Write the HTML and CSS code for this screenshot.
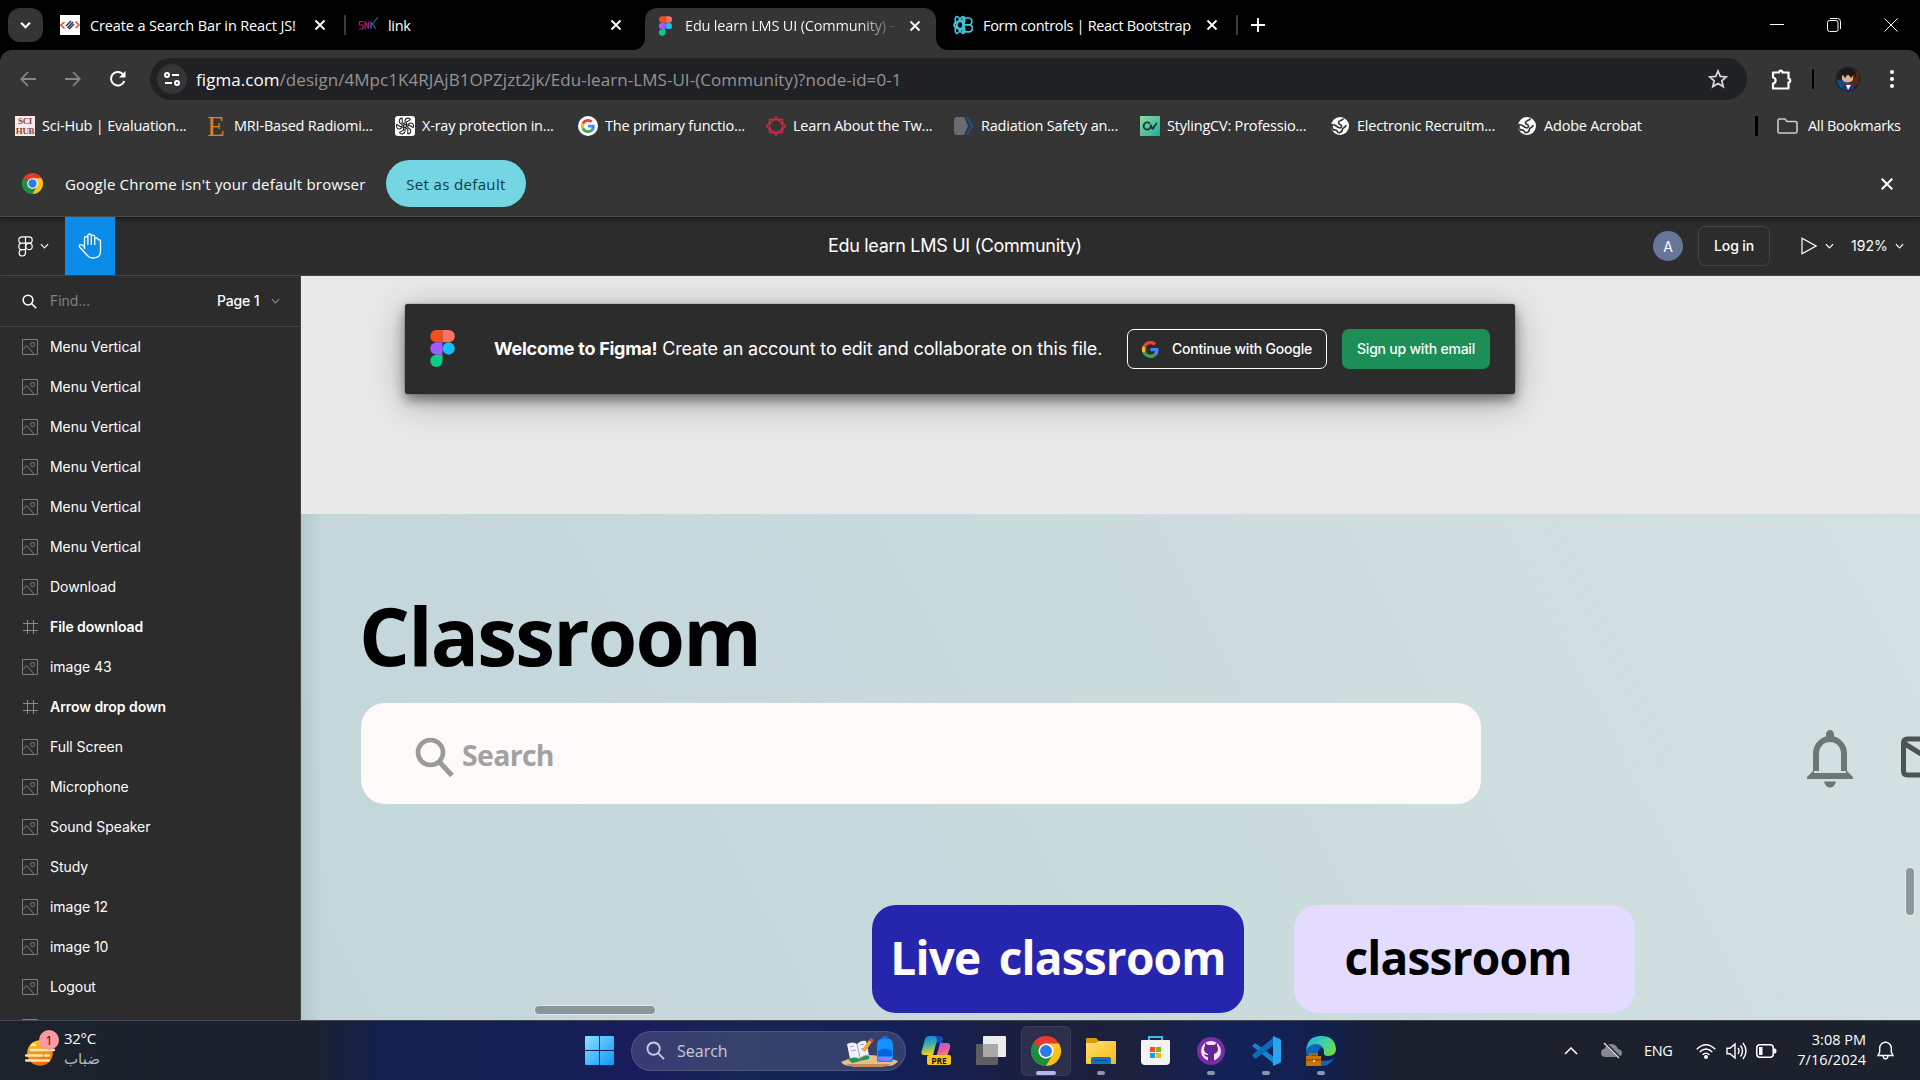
FILE: index.html
```html
<!DOCTYPE html>
<html lang="en">
<head>
<meta charset="utf-8">
<title>Edu learn LMS UI (Community) – Figma</title>
<link rel="stylesheet" href="styles.css">
</head>
<body>
<svg class="defs" width="0" height="0">
  <symbol id="x" viewBox="0 0 12 12"><path d="M1.500 1.500l9 9M10.500 1.500l-9 9" fill="none" stroke="currentColor" stroke-width="1.800"/></symbol>
  <symbol id="chev" viewBox="0 0 10 6"><path d="M1 1l4 4 4-4" fill="none" stroke="currentColor" stroke-width="1.300"/></symbol>
  <symbol id="figma" viewBox="0 0 24 36"><path d="M6 0h6v12H6A6 6 0 0 1 6 0z" fill="#f24e1e"/><path d="M12 0h6a6 6 0 0 1 0 12h-6z" fill="#ff7262"/><path d="M6 12h6v12H6a6 6 0 0 1 0-12z" fill="#a259ff"/><circle cx="18" cy="18" r="6" fill="#1abcfe"/><path d="M6 24h6v6a6 6 0 1 1-6-6z" fill="#0acf83"/></symbol>
  <symbol id="google" viewBox="0 0 48 48"><path fill="#EA4335" d="M24 9.500c3.500 0 6.700 1.200 9.200 3.600l6.900-6.900C35.900 2.400 30.500 0 24 0 14.600 0 6.500 5.400 2.600 13.200l8 6.200C12.400 13.700 17.700 9.500 24 9.500z"/><path fill="#4285F4" d="M47 24.500c0-1.600-.2-3.100-.4-4.500H24v9h12.900c-.6 3-2.300 5.500-4.800 7.200l7.700 6C44.400 38 47 31.800 47 24.500z"/><path fill="#FBBC05" d="M10.500 28.600a14.500 14.500 0 0 1 0-9.200l-8-6.200a24 24 0 0 0 0 21.600z"/><path fill="#34A853" d="M24 48c6.500 0 11.900-2.100 15.900-5.800l-7.700-6c-2.200 1.500-4.900 2.300-8.200 2.300-6.300 0-11.600-4.200-13.500-9.900l-8 6.200C6.500 42.600 14.600 48 24 48z"/></symbol>
  <symbol id="chrome" viewBox="0 0 48 48"><path d="M24 24L3.200 12A24 24 0 0 1 44.800 12z" fill="#e33b2e"/><path d="M24 24l20.800-12A24 24 0 0 1 24 48z" fill="#fbc116"/><path d="M24 24v24A24 24 0 0 1 3.200 12z" fill="#229342"/><path d="M24 12h20.800L34.400 30 24 48z" fill="#fcc934"/><path d="M3.200 12L13.600 30 24 36l10.400-6L24 48A24 24 0 0 1 3.200 12z" fill="#1e8e3e"/><circle cx="24" cy="24" r="12" fill="#fff"/><circle cx="24" cy="24" r="9.500" fill="#2d78ea"/></symbol>
  <symbol id="globe" viewBox="0 0 20 20"><circle cx="10" cy="10" r="9" fill="#fff"/><path d="M13.500 2.500c-1 2.500-5 1.500-5 4s3 1.500 3 3.500-1.500 2-3 1.500S5.500 8.500 2 8.500c-.5 2 0 4 1.500 5.500 2 0 3-.5 3.500 1s1.500 2 3 1.500 2.500-2 2.500-3.500 3.500-1 3.500-4" fill="none" stroke="#353535" stroke-width="1.700"/></symbol>
  <symbol id="pic" viewBox="0 0 16 16"><g fill="none" stroke="#7d7d7d"><path d="M.5.5h15v15H.5z"/><circle cx="10.500" cy="5.500" r="2"/><path d="M1 10.500l3.500-4 8 9"/></g></symbol>
  <symbol id="frame" viewBox="0 0 16 16"><path d="M5.500 1v14M11.500 1v14M1 4.500h15M1 11.500h15" stroke="#8b8b8b" fill="none"/></symbol>
  <symbol id="lens" viewBox="0 0 20 20"><circle cx="8" cy="8" r="6.500" fill="none" stroke="currentColor" stroke-width="2"/><path d="M12.500 12.500L19 19" stroke="currentColor" stroke-width="2"/></symbol>
</svg>

<div class="tabs">
  <div class="tabsearch"><svg width="11" height="8" viewBox="0 0 10 6"><path d="M1 1l4 4 4-4" fill="none" stroke="#fff" stroke-width="2"/></svg></div>
  <div class="tab t1">
    <svg width="20" height="20" viewBox="0 0 20 20"><path fill="#fff" d="M0 0h20v20H0z"/><path d="M4.500 7l-3.500 3 3.500 3.500M15.500 6.500l3.500 3.500-3.500 3" fill="none" stroke="#e5533a" stroke-width="1.600"/><path d="M6 11l5-5M7.500 13l5.500-6M9 14l5-5" stroke="#29324d" stroke-width="1.500"/></svg>
    <span>Create a Search Bar in React JS!</span><svg class="x" width="12" height="12"><use href="#x"/></svg>
  </div>
  <div class="tab t2">
    <svg width="20" height="20" viewBox="0 0 20 20"><path d="M5 6.500H1.500V10H5v4H1M7 14V6.500l3.500 7V6.500" fill="none" stroke="#b01b78" stroke-width="1.200"/><path d="M13 14V7l5 7M12 12l8-10" fill="none" stroke="#186ba9" stroke-width="1.200"/></svg>
    <span>link</span><svg class="x" width="12" height="12"><use href="#x"/></svg>
  </div>
  <div class="tab t3">
    <svg width="13" height="20"><use href="#figma"/></svg>
    <span class="fade">Edu learn LMS UI (Community) –</span><svg class="x" width="12" height="12"><use href="#x"/></svg>
  </div>
  <div class="tab t4">
    <svg width="20" height="20" viewBox="0 0 20 20"><g fill="none" stroke="#41c7dc" stroke-width="1.700"><path d="M10 3h5.500a3.300 3.300 0 0 1 0 6.800H10zM10 9.800h6a3.500 3.500 0 0 1 0 7h-6z"/><ellipse cx="7" cy="10" rx="3.200" ry="9" transform="rotate(25 7 10)"/><ellipse cx="7" cy="10" rx="3.200" ry="9" transform="rotate(-25 7 10)"/><path d="M10 6.500Q1 6 1 10t9 3.500"/></g></svg>
    <span>Form controls | React Bootstrap</span><svg class="x" width="12" height="12"><use href="#x"/></svg>
  </div>
  <svg class="plus" width="14" height="14" viewBox="0 0 14 14"><path d="M7 0v14M0 7h14" stroke="#fff" stroke-width="1.900"/></svg>
  <div class="winctl">
    <svg width="14" height="14" viewBox="0 0 14 14"><path d="M0 6.500h14" stroke="#fff"/></svg>
    <svg width="14" height="14" viewBox="0 0 14 14"><g fill="none" stroke="#fff"><rect x=".5" y="2.500" width="10.500" height="11" rx="2"/><path d="M3 .5h7.500a3 3 0 0 1 3 3V11"/></g></svg>
    <svg width="14" height="14" viewBox="0 0 14 14"><path d="M.5.5l13 13M13.500.5l-13 13" stroke="#fff"/></svg>
  </div>
</div>

<div class="navbar">
  <svg class="dim" width="16" height="16" viewBox="0 0 16 16"><path d="M16 8H1.500M8 1L1.300 8 8 15" fill="none" stroke="currentColor" stroke-width="1.800"/></svg>
  <svg class="dim" width="16" height="16" viewBox="0 0 16 16"><path d="M0 8h14.500M8 1l6.700 7L8 15" fill="none" stroke="currentColor" stroke-width="1.800"/></svg>
  <svg width="16" height="16" viewBox="0 0 16 16"><path d="M14.300 10A6.800 6.800 0 1 1 13 3.300l1.500 2" fill="none" stroke="#fff" stroke-width="2"/><path d="M15.500 0v6.500H9z" fill="#fff"/></svg>
  <div class="omni">
    <div class="tune"><svg width="16" height="14" viewBox="0 0 16 14"><g fill="none" stroke="#fff" stroke-width="2"><circle cx="3" cy="3" r="2"/><path d="M8 3h7M1 11h7"/><circle cx="13" cy="11" r="2"/></g></svg></div>
    <span class="url"><b>figma.com</b>/design/4Mpc1K4RJAjB1OPZjzt2jk/Edu-learn-LMS-UI-(Community)?node-id=0-1</span>
    <svg width="20" height="20" viewBox="0 0 20 20"><path d="M10 2l2.300 5.400 6 .5-4.500 3.900 1.400 5.800L10 14.500l-5.200 3.100 1.400-5.800L1.700 7.900l6-.5z" fill="none" stroke="#d5d5d5" stroke-width="1.800"/></svg>
  </div>
  <svg class="puzzle" width="21" height="21" viewBox="0 0 21 21"><path d="M2 3.500h6c.3-2.500 3.200-2.500 3.500 0H17.500v6c2.500.5 2.500 3.500 0 4v6H2v-5c3.500-.5 3.500-5.500 0-6z" fill="none" stroke="#fff" stroke-width="2.200" stroke-linejoin="round"/></svg>
  <i class="vbar"></i>
  <svg class="person" width="26" height="26" viewBox="0 0 26 26"><circle cx="13" cy="13" r="12.500" fill="#16252f"/><path d="M16 2l8 5v11l-8 4z" fill="#522a1d"/><path d="M2 14l10 1-1 10q-8-3-9-11z" fill="#174e86"/><path d="M7 9h11v5q-5 5-11 0z" fill="#d9b196"/><path d="M4 12Q4 2 13 2t8 10l-2-4-3 4-3-4-3 4-2-3z" fill="#21160f"/><path d="M8 18l5 2 5-2 1 5q-6 3-12 0z" fill="#1b3778"/><path d="M11 19h5l-3 5z" fill="#fff"/><path d="M11 17.500h5V19h-5z" fill="#b42727"/></svg>
  <svg width="4" height="18" viewBox="0 0 4 18"><g fill="#fff"><circle cx="2" cy="2" r="2"/><circle cx="2" cy="9" r="2"/><circle cx="2" cy="16" r="2"/></g></svg>
</div>

<div class="bookmarks">
  <div class="bm w1"><div class="sci">SCI<br>HUB</div><span>Sci-Hub | Evaluation...</span></div>
  <div class="bm w2"><div class="ele">E</div><span>MRI-Based Radiomi...</span></div>
  <div class="bm w3"><svg width="20" height="20" viewBox="0 0 20 20"><rect width="20" height="20" rx="3" fill="#fff"/><g fill="none" stroke="#222" stroke-width="1.100"><path id="petal" d="M10 7.300V4.600a2.900 2.900 0 0 1 5.400-1l-4 2.400v5"/><use href="#petal" transform="rotate(60 10 10)"/><use href="#petal" transform="rotate(120 10 10)"/><use href="#petal" transform="rotate(180 10 10)"/><use href="#petal" transform="rotate(240 10 10)"/><use href="#petal" transform="rotate(300 10 10)"/></g></svg><span>X-ray protection in...</span></div>
  <div class="bm w4"><svg width="20" height="20" viewBox="0 0 20 20"><circle cx="10" cy="10" r="10" fill="#fff"/><use href="#google" x="3" y="3" width="14" height="14"/></svg><span>The primary functio...</span></div>
  <div class="bm w5"><svg width="20" height="20" viewBox="0 0 20 20"><g fill="none" stroke="#c62d45" stroke-width="1.400"><path d="M10 .8l2.500 3 4-.6.200 4 2.800 2.800-2.800 2.800-.2 4-4-.6-2.500 3-2.500-3-4 .6-.2-4L.500 10l2.800-2.800.2-4 4 .6z"/><circle cx="10" cy="10" r="6.500"/></g></svg><span>Learn About the Tw...</span></div>
  <div class="bm w6"><svg width="20" height="20" viewBox="0 0 20 20"><path d="M2 1h8l4 9-4 9H2l-2-2V3z" fill="#696b72"/><path d="M13 1l5 9-5 9" fill="none" stroke="#17538f" stroke-width="2"/></svg><span>Radiation Safety an...</span></div>
  <div class="bm w7"><svg width="20" height="20" viewBox="0 0 20 20"><defs><linearGradient id="cv" x2="1" y2="1"><stop stop-color="#8edba0"/><stop offset="1" stop-color="#21ad9c"/></linearGradient></defs><path fill="url(#cv)" d="M0 0h20v20H0z"/><path d="M17 7q-1.500 1-3 4t-2 1L10.500 8.500M10.800 10a3.600 3.600 0 1 1-1-2.500" fill="none" stroke="#163d3b" stroke-width="1.900"/></svg><span>StylingCV: Professio...</span></div>
  <div class="bm w8"><svg width="20" height="20"><use href="#globe"/></svg><span>Electronic Recruitm...</span></div>
  <div class="bm w9"><svg width="20" height="20"><use href="#globe"/></svg><span>Adobe Acrobat</span></div>
  <i class="vbar"></i>
  <div class="bm all"><svg width="21" height="16" viewBox="0 0 21 16"><path d="M1 2.500Q1 1 2.500 1H8l2 2.500h8.500q1.500 0 1.500 1.500v8.500q0 1.500-1.500 1.500h-16Q1 15 1 13.500z" fill="none" stroke="#ccc" stroke-width="1.600"/></svg><span>All Bookmarks</span></div>
</div>

<div class="infobar">
  <svg width="21" height="21"><use href="#chrome"/></svg>
  <span>Google Chrome isn't your default browser</span>
  <button>Set as default</button>
  <svg class="x" width="14" height="14"><use href="#x"/></svg>
</div>

<div class="figbar">
  <div class="menu">
    <svg width="15" height="21" viewBox="0 0 15 21"><g fill="none" stroke="#fff" stroke-width="1.200"><path d="M7.500.8H4a3.200 3.200 0 0 0 0 6.400h3.500zM7.500.8H11a3.200 3.200 0 0 1 0 6.400H7.500zM7.500 7.200H4a3.200 3.200 0 0 0 0 6.400h3.500zM7.500 13.600H4a3.200 3.200 0 1 0 3.500 3.200z"/><circle cx="11" cy="10.400" r="3.200"/></g></svg>
    <svg width="9" height="6"><use href="#chev"/></svg>
  </div>
  <div class="hand"><svg width="24" height="27" viewBox="0 0 24 27"><path d="M6.500 16V5.500q0-2 1.700-2t1.700 2V12 3q0-2 1.700-2t1.700 2v9V4q0-1.800 1.700-1.800T16.700 4v8V6.500q0-1.700 1.600-1.700t1.700 1.700q2.500 0 2.500 2V18q0 7-7.500 7-4 0-6-3l-7-7.500q-1.500-2 0-2.800Q4 11 6.500 14" fill="none" stroke="#fff" stroke-width="1.300"/></svg></div>
  <div class="title">Edu learn LMS UI (Community)</div>
  <div class="user">A</div>
  <div class="login">Log in</div>
  <svg class="play" width="16" height="18" viewBox="0 0 16 18"><path d="M1 1.200L15 9 1 16.800z" fill="none" stroke="#fff" stroke-width="1.200"/></svg>
  <svg class="c1" width="9" height="6"><use href="#chev"/></svg>
  <span class="zoom">192%</span>
  <svg width="9" height="6"><use href="#chev"/></svg>
</div>

<div class="work">
  <div class="side">
    <div class="find"><svg width="15" height="15"><use href="#lens"/></svg><span class="ph">Find...</span><span class="page">Page 1</span><svg class="pc" width="9" height="6"><use href="#chev"/></svg></div>
    <div class="layers">
      <div class="row"><svg><use href="#pic"/></svg><span>Menu Vertical</span></div>
      <div class="row"><svg><use href="#pic"/></svg><span>Menu Vertical</span></div>
      <div class="row"><svg><use href="#pic"/></svg><span>Menu Vertical</span></div>
      <div class="row"><svg><use href="#pic"/></svg><span>Menu Vertical</span></div>
      <div class="row"><svg><use href="#pic"/></svg><span>Menu Vertical</span></div>
      <div class="row"><svg><use href="#pic"/></svg><span>Menu Vertical</span></div>
      <div class="row"><svg><use href="#pic"/></svg><span>Download</span></div>
      <div class="row bold"><svg><use href="#frame"/></svg><span>File download</span></div>
      <div class="row"><svg><use href="#pic"/></svg><span>image 43</span></div>
      <div class="row bold"><svg><use href="#frame"/></svg><span>Arrow drop down</span></div>
      <div class="row"><svg><use href="#pic"/></svg><span>Full Screen</span></div>
      <div class="row"><svg><use href="#pic"/></svg><span>Microphone</span></div>
      <div class="row"><svg><use href="#pic"/></svg><span>Sound Speaker</span></div>
      <div class="row"><svg><use href="#pic"/></svg><span>Study</span></div>
      <div class="row"><svg><use href="#pic"/></svg><span>image 12</span></div>
      <div class="row"><svg><use href="#pic"/></svg><span>image 10</span></div>
      <div class="row"><svg><use href="#pic"/></svg><span>Logout</span></div>
      <div class="row"><svg><use href="#pic"/></svg></div>
    </div>
  </div>
  <div class="canvas">
    <div class="banner">
      <svg width="25" height="37" viewBox="0 0 24 36"><use href="#figma"/></svg>
      <p><b>Welcome to Figma!</b> <span>Create an account to edit and collaborate on this file.</span></p>
      <div class="gbtn"><svg width="17" height="17"><use href="#google"/></svg><span>Continue with Google</span></div>
      <div class="ebtn"><span>Sign up with email</span></div>
    </div>
    <div class="board">
      <h1>Classroom</h1>
      <div class="line">
        <div class="searchbox"><svg width="40" height="42" viewBox="0 0 40 42"><circle cx="15.500" cy="16.500" r="12.500" fill="none" stroke="#9a9a99" stroke-width="4.600"/><path d="M24.500 26l12.500 13.500" stroke="#9a9a99" stroke-width="5"/></svg><span>Search</span></div>
        <svg class="bell" width="46" height="58" viewBox="0 0 46 58"><path d="M9 41V23.500a14 14.500 0 0 1 28 0V41" fill="none" stroke="#6d7677" stroke-width="6"/><path d="M19 9V4.500a4 4.500 0 0 1 8 0V9zM0 49v-2l7-7v3h32v-3l7 7v2zM17 51.500h12q-1.500 6-6 6t-6-6z" fill="#6d7677"/></svg>
        <svg class="mail" width="19" height="42" viewBox="0 0 19 42"><path d="M30 3H6.500Q2.500 3 2.500 7v28q0 4 4 4H30M4 8l26 16" fill="none" stroke="#4d5253" stroke-width="5"/></svg>
      </div>
      <div class="chips"><div class="live"><span>Live classroom</span></div><div class="cls"><span>classroom</span></div></div>
      <i class="hscroll"></i><i class="vscroll"></i>
    </div>
  </div>
</div>

<div class="taskbar">
  <div class="weather">
    <svg width="36" height="38" viewBox="0 0 36 38"><defs><linearGradient id="sun" x2=".3" y2="1"><stop stop-color="#ffd21e"/><stop offset="1" stop-color="#ef6c0c"/></linearGradient></defs><circle cx="15" cy="21" r="12.800" fill="url(#sun)"/><g stroke="#f6e4b4" stroke-width="2.400" stroke-linecap="round"><path d="M7 13h3M6 18h23M1 23.500h16M20 23.500h4M1 28.500h23"/></g></svg>
    <span class="badge">1</span>
    <div class="wtext"><span>32°C</span><span class="ar" lang="ar">ضباب</span></div>
  </div>
  <div class="apps">
    <svg class="start" width="29" height="29" viewBox="0 0 29 29"><defs><linearGradient id="win" x2="1" y2="1"><stop stop-color="#8be0ff"/><stop offset="1" stop-color="#1195f7"/></linearGradient></defs><path d="M1 0h13v14H0V1q0-1 1-1zM15 0h13q1 0 1 1v13H15zM0 15h14v14H1q-1 0-1-1zM15 15h14v13q0 1-1 1H15z" fill="url(#win)"/></svg>
    <div class="tsearch"><svg width="19" height="19"><use href="#lens"/></svg><span>Search</span>
      <svg width="57" height="32" viewBox="0 0 57 32"><path d="M0 27q15-7 28-7t29 6q-3 5-10 5H10q-7 0-10-4z" fill="#e9bc8b"/><path d="M5 29h45q-4 3-9 3H12z" fill="#c48a58"/><path d="M6 9q6-3 10 0 4-4 9-3l3 14q-5-1-9 3-4-2-10 1z" fill="#f3f0ff"/><path d="M7 24q7-3 11 0 5-4 10-3v3q-6 1-17 4z" fill="#1d9653"/><path d="M16 9l3 14M9 12l4-1M10 16l5-1M19 10l4-1M20 14l5-1" stroke="#9fa0b9"/><path d="M21 15l7-10 3 2-7 10z" fill="#f6a623"/><path d="M28 5l2-2 3 2-2 3z" fill="#e14a50"/><path d="M36 10q0-7 8-7t8 7v15q0 2-2 2H38q-2 0-2-2z" fill="#168fff"/><path d="M41 4q3-5 6 0" fill="none" stroke="#1b65cf" stroke-width="2"/><path d="M37 16q7-5 14 0v5H37z" fill="#0065df"/><path d="M37 22h14v2q-7 4-14 0z" fill="#9d73ff"/></svg>
    </div>
    <div class="app"><svg width="30" height="30" viewBox="0 0 30 30"><defs><linearGradient id="ca" x2=".2" y2="1"><stop stop-color="#1378e8"/><stop offset=".5" stop-color="#38b6a4"/><stop offset="1" stop-color="#f2cc26"/></linearGradient><linearGradient id="cb" x2=".4" y2="1"><stop stop-color="#9a5cf0"/><stop offset=".6" stop-color="#eb5b96"/><stop offset="1" stop-color="#f79a45"/></linearGradient></defs><path d="M8 0h10q3 0 4 4h-3q-3 0-4 4l-3 11H3q-4 0-2-5L4 3q1-3 4-3z" fill="url(#ca)"/><path d="M13 0h6q2 0 3 7h-5q-2-7-4-7z" fill="#1747b8"/><path d="M19 7h7q4 0 3 5l-3 8q-1 2-4 2h-7z" fill="url(#cb)"/><rect x="6" y="19" width="24" height="10" rx="2" fill="#fac51a"/><text x="18" y="27.500" class="pre">PRE</text></svg></div>
    <div class="app"><svg width="30" height="30" viewBox="0 0 30 30"><rect y="8" width="22" height="21" rx="1" fill="#5d5d62"/><rect x="7" width="23" height="21" rx="1" fill="#ececec"/><path d="M7 8h15v13H7z" fill="#a9a9a9"/></svg></div>
    <div class="app on"><svg width="30" height="30"><use href="#chrome"/></svg></div>
    <div class="app run"><svg width="30" height="30" viewBox="0 0 30 30"><defs><linearGradient id="fo" x2="1" y2="1"><stop stop-color="#ffdf71"/><stop offset="1" stop-color="#fab814"/></linearGradient></defs><path d="M0 3q0-1 1-1h9l3 3v5H0z" fill="#dc9a08"/><path d="M0 7h10l3-2h16q1 0 1 1v21q0 1-1 1H1q-1 0-1-1z" fill="url(#fo)"/><path d="M5 28v-5q0-2 2-2h16q2 0 2 2v5z" fill="#0d74c5"/><path d="M8 24.500h14" stroke="#064d91"/></svg></div>
    <div class="app"><svg width="30" height="30" viewBox="0 0 30 30"><path d="M8 6V1h13v5" fill="none" stroke="#36bff5" stroke-width="2"/><path d="M0 5q0-1 1-1h27q1 0 1 1v20q0 4-4 4H4q-4 0-4-4z" fill="#f3f3f3"/><path d="M9 11h5v5H9z" fill="#f25022"/><path d="M15 11h5v5h-5z" fill="#7fba00"/><path d="M9 17h5v5H9z" fill="#00a4ef"/><path d="M15 17h5v5h-5z" fill="#ffb900"/></svg></div>
    <div class="app run"><svg width="28" height="28" viewBox="0 0 28 28"><circle cx="14" cy="14" r="14" fill="#7b2ba5"/><circle cx="14" cy="14" r="10" fill="#f7ebfb"/><path d="M11 24v-4q-3 0-4-3 2 1 4 1v-1q-4-1-4-5 0-2 1-3V6l3 2h6l3-2v3q1 1 1 3 0 4-4 5v7z" fill="#682390"/></svg></div>
    <div class="app run"><svg width="30" height="30" viewBox="0 0 30 30"><path d="M1 10l3-3 19 14v7z" fill="#1584d0"/><path d="M1 19l3 4L23 9V1z" fill="#0b6cb8"/><path d="M22 0l7 3q1 .5 1 1.500v21q0 1-1 1.500l-7 3z" fill="#28a4f2"/></svg></div>
    <div class="app run"><svg width="30" height="30" viewBox="0 0 30 30"><defs><linearGradient id="ed" x2="1" y2=".6"><stop stop-color="#20a9e0"/><stop offset=".5" stop-color="#37cdb5"/><stop offset="1" stop-color="#68dc4c"/></linearGradient></defs><path d="M0 15Q1 0 15 0t15 13q0 7-8 7-5 0-4-4 0-7-8-7Q3 9 0 15z" fill="url(#ed)"/><path d="M0 15q3-7 10-7 4 0 6 3-5 3-4 9 2 5 7 5 5 0 9-3-4 8-13 8Q1 30 0 15z" fill="#0d65bd"/><path d="M0 20h15v10H0z" fill="#c87404"/><path d="M0 24h15" stroke="#754008"/><path d="M4 20v-2h7v2" fill="none" stroke="#b87008" stroke-width="1.500"/><path d="M7 24h2v2H7z" fill="#ffd34b"/></svg></div>
  </div>
  <div class="tray">
    <svg width="14" height="8" viewBox="0 0 14 8"><path d="M1 7l6-6 6 6" fill="none" stroke="#fff" stroke-width="1.500"/></svg>
    <svg class="cloud" width="21" height="17" viewBox="0 0 21 17"><path d="M5 15q-5 0-5-4t4-4.500Q5 2 10 2t7 5q4 .5 4 4t-4 4z" fill="#85898f"/><path d="M3 0l16 16" stroke="#1d2430" stroke-width="3"/><path d="M3 1l15 15" stroke="#e8e8e8" stroke-width="1.200"/></svg>
    <span class="eng">ENG</span>
    <svg class="wifi" width="20" height="16" viewBox="0 0 20 16"><g fill="none" stroke="#fff" stroke-width="1.400"><path d="M.7 6.200q9.300-9 18.600 0M3.700 9q6.300-6 12.600 0M6.500 11.800q3.500-3.300 7 0"/></g><circle cx="10" cy="14" r="2" fill="#fff"/></svg>
    <svg class="spk" width="21" height="18" viewBox="0 0 21 18"><g fill="none" stroke="#fff" stroke-width="1.400"><path d="M1 6.300h3L9 2v14l-5-4.300H1zM12 6q2 3 0 6M14.500 3.500q4 5.500 0 11M17 1q6 8 0 16"/></g></svg>
    <svg class="bat" width="21" height="14" viewBox="0 0 21 14"><rect x=".8" y=".8" width="16.400" height="12.400" rx="3" fill="none" stroke="#fff" stroke-width="1.500"/><path d="M3 3h3.500v8H3zM18 4.500h1q1.500 0 1.500 2.500T19 9.500h-1z" fill="#fff"/></svg>
    <div class="clock"><span>3:08 PM</span><span>7/16/2024</span></div>
    <svg class="tbell" width="17" height="19" viewBox="0 0 17 19"><path d="M1 14.500l1.700-3.500V7a5.800 5.800 0 0 1 11.600 0v4l1.700 3.500zM6 15q.5 3 2.500 3t2.500-3" fill="none" stroke="#fff" stroke-width="1.400"/></svg>
  </div>
</div>
</body>
</html>
```
FILE: styles.css
```css
* { box-sizing: border-box; }
body { margin: 0; width: 1920px; height: 1080px; overflow: hidden; background: #000; color: #fff; font: 15px "Open Sans", "Noto Sans", sans-serif; }
svg { display: block; flex: none; }
.defs { position: absolute; }
span, p { white-space: nowrap; }

.tabs { height: 50px; display: flex; align-items: center; background: #000; padding-left: 8px; }
.tabsearch { width: 35px; height: 34px; border-radius: 12px; background: #353535; display: flex; align-items: center; justify-content: center; }
.tab { display: flex; flex: none; align-items: center; height: 42px; font-size: 14.5px; letter-spacing: -.32px; }
.tab span { flex: 1; padding-left: 10px; }
.t1 { width: 283px; padding: 0 17px 0 0; margin-left: 17px; letter-spacing: -.13px; }
.t1::after, .t4::after { content: ""; width: 2px; height: 20px; background: #3c3c3c; margin-left: 18px; margin-right: -20px; }
.t2 { width: 302px; padding-left: 15px; padding-right: 23px; }
.t3 { width: 291px; height: 42px; margin-top: 8px; border-radius: 12px 12px 0 0; background: #353535; padding: 0 14px 7px 14px; position: relative; letter-spacing: -.18px; }
.t3::before, .t3::after { content: ""; position: absolute; bottom: 0; width: 12px; height: 12px; }
.t3::before { left: -12px; background: radial-gradient(circle at 0 0, #000 11.5px, #353535 12.5px); }
.t3::after { right: -12px; background: radial-gradient(circle at 100% 0, #000 11.5px, #353535 12.5px); }
.t3 .fade { padding-left: 13px; flex: none; width: 225px; overflow: hidden; background: linear-gradient(90deg, #fff 185px, #444 224px); background-clip: text; color: transparent; }
.t3 .x { margin-left: 12px; }
.t4 { width: 299px; padding-left: 17px; padding-right: 17px; }
.plus { margin-left: 16px; }
.winctl { margin-left: auto; display: flex; gap: 43px; padding-right: 22px; }

.navbar { height: 58px; background: #353535; border-radius: 12px 12px 0 0; display: flex; align-items: center; padding: 0 26px 0 20px; }
.navbar > svg + svg { margin-left: 29px; }
.dim { color: #858585; }
.omni { margin-left: 24px; width: 1597px; height: 42px; border-radius: 21px; background: #202124; display: flex; align-items: center; padding: 0 19px 0 7px; }
.tune { width: 30px; height: 30px; border-radius: 50%; background: #353535; display: flex; align-items: center; justify-content: center; }
.url { flex: 1; margin-left: 9px; color: #949494; font-size: 17px; letter-spacing: .06px; }
.url b { color: #fff; font-weight: 400; }
.puzzle { margin-left: 24px; }
.vbar { width: 3px; height: 20px; background: #000; border-radius: 1px; }
.navbar .vbar { margin-left: 20px; width: 2px; }
.person { margin-left: 21px; }
.navbar svg.person + svg { margin-left: auto; }

.bookmarks { height: 36px; background: #353535; display: flex; align-items: center; padding-left: 15px; font-size: 14.5px; letter-spacing: -.2px; }
.bm { display: flex; align-items: center; gap: 7px; }
.bm span { margin-top: -2px; }
.w1 { width: 192px; } .w2 { width: 188px; } .w3 { width: 183px; } .w4 { width: 188px; } .w5 { width: 188px; } .w6 { width: 186px; } .w7 { width: 190px; } .w8 { width: 187px; } .w9 { width: 238px; }
.sci { width: 20px; height: 20px; background: #f6eceb; color: #9d3a35; font: bold 9px/10px "Liberation Serif", serif; letter-spacing: -.3px; text-align: center; }
.ele { width: 20px; color: #e57c20; font: 29px/20px "Liberation Serif", serif; }
.all { gap: 10px; margin-left: 19px; letter-spacing: -.3px; }

.infobar { height: 73px; background: #353535; border-bottom: 1px solid #474d50; display: flex; align-items: center; padding: 7px 26px 0 22px; font-size: 15px; }
.infobar span { margin-left: 22px; width: 300px; letter-spacing: .2px; }
.infobar button { margin-left: 21px; width: 140px; height: 47px; border: 0; border-radius: 24px; background: #74d5e3; color: #093d48; font: 500 15px "Open Sans", sans-serif; letter-spacing: .35px; padding: 0; }
.infobar .x { margin-left: auto; }

.figbar { height: 59px; background: #2c2c2c; border-bottom: 1px solid #444; display: flex; align-items: center; font-family: Inter, sans-serif; box-shadow: inset 0 5px 5px -4px #111; }
.menu { width: 65px; display: flex; align-items: center; gap: 7px; padding-left: 18px; }
.hand { width: 50px; height: 58px; background: #0c8ce9; display: flex; align-items: center; justify-content: center; }
.title { margin-left: 713px; margin-top: -2px; width: 825px; font-size: 18px; letter-spacing: -.31px; }
.user { width: 30px; height: 30px; border-radius: 50%; background: #667799; display: flex; align-items: center; justify-content: center; font-size: 14px; }
.login { margin-left: 15px; width: 72px; height: 40px; border: 1px solid #444; border-radius: 7px; display: flex; align-items: center; justify-content: center; font-size: 14px; font-weight: 500; letter-spacing: -.15px; padding-bottom: 1px; }
.play { margin-left: 31px; }
.c1 { margin-left: 8px; }
.zoom { margin-left: 17px; width: 44px; font-size: 14px; padding-bottom: 1px; }

.work { height: 744px; display: flex; font-family: Inter, sans-serif; }
.side { width: 301px; background: #2c2c2c; border-right: 1px solid #444; font-size: 14px; letter-spacing: -.04px; overflow: hidden; }
.find { height: 51px; border-bottom: 1px solid #444; display: flex; align-items: center; padding-left: 22px; }
.find span { padding-bottom: 1px; }
.ph { margin-left: 13px; width: 167px; color: #808080; }
.page { font-weight: 500; width: 54px; letter-spacing: -.15px; }
.pc { color: #888; }
.row { height: 40px; display: flex; align-items: center; padding-left: 22px; gap: 12px; }
.row svg { width: 16px; height: 16px; }
.row span { padding-bottom: 2px; }
.bold { font-weight: 600; letter-spacing: -.05px; }

.canvas { flex: 1; background: #e9e9e9; position: relative; padding-top: 238px; overflow: hidden; }
.banner { position: absolute; left: 104px; top: 28px; width: 1110px; height: 90px; background: #2c2c2c; border-radius: 3px; box-shadow: 0 0 1px #111, 0 6px 12px rgba(0,0,0,.42), 0 8px 36px rgba(0,0,0,.3); display: flex; align-items: center; padding-left: 25px; }
.banner > svg { margin-top: -2px; }
.banner p { margin: -2px 0 0 39px; width: 633px; font-size: 18px; letter-spacing: -.17px; }
.banner b { font-weight: 700; letter-spacing: -.27px; }
.gbtn, .ebtn { height: 40px; border-radius: 7px; display: flex; align-items: center; font-size: 14px; font-weight: 500; }
.gbtn { width: 200px; border: 1px solid #fff; padding-left: 14px; gap: 13px; letter-spacing: -.2px; }
.gbtn span, .ebtn span { padding-bottom: 1px; }
.ebtn { margin-left: 15px; width: 148px; background: #1b8f55; justify-content: center; letter-spacing: -.22px; }

.board { height: 506px; padding: 76px 0 0 60px; position: relative; background: linear-gradient(90deg, rgba(70,110,120,.13), transparent 20px), linear-gradient(63deg, #c3d6da 0%, #c7d9dc 35%, #cbdcdc 55%, #cddcdf 61%, #cedddd 66%, #d3e1e2 100%); font-family: "Open Sans", sans-serif; }
.board h1 { margin: 0 0 0 -2px; height: 113px; line-height: 90px; font-size: 80px; font-weight: 700; color: #000; letter-spacing: -1.8px; }
.line { display: flex; align-items: center; height: 101px; }
.searchbox { width: 1120px; height: 101px; border-radius: 24px; background: #fffafa; display: flex; align-items: center; padding: 6px 0 0 54px; color: #a3a2a1; font-size: 28.5px; font-weight: 700; letter-spacing: -.7px; }
.searchbox span { margin: -4px 0 0 7px; }
.bell { margin: 10px 0 0 326px; }
.mail { margin: 7px 0 0 48px; }
.chips { margin-top: 101px; padding-left: 511px; display: flex; gap: 50px; font-size: 46px; font-weight: 700; letter-spacing: -.8px; }
.chips div { height: 108px; border-radius: 24px; display: flex; align-items: center; justify-content: center; padding-bottom: 4px; }
.live { width: 372px; background: #2525ad; color: #fffafa; word-spacing: 7px; }
.cls { width: 341px; background: #e3dcff; color: #000; padding-right: 13px; }
.hscroll, .vscroll { position: absolute; background: #8a9697; border-radius: 4px; box-shadow: 0 0 0 1px rgba(255,255,255,.4); }
.hscroll { left: 234px; top: 492px; width: 120px; height: 8px; }
.vscroll { left: 1605px; top: 354px; width: 8px; height: 47px; }

.taskbar { height: 60px; border-top: 1px solid #43494f; background: linear-gradient(90deg, #1d222c 0, #1b222d 310px, #14204d 380px, #152054 560px, #191c5d 640px, #162552 740px, #132058 900px, #1b1e3e 1030px, #1d203b 1130px, #12215a 1230px, #13204c 1330px, #1b202c 1400px, #1b212d 1920px); display: flex; align-items: center; }
.weather { width: 585px; display: flex; align-items: center; padding-left: 25px; position: relative; }
.badge { position: absolute; left: 39px; top: -1px; width: 20px; height: 20px; border-radius: 50%; background: #ff98a2; color: #222; font-size: 13px; line-height: 20px; text-align: center; }
.wtext { display: flex; flex-direction: column; margin: -3px 0 0 3px; font-size: 15px; line-height: 21px; letter-spacing: -.3px; }
.ar { color: #b5b8bc; font-family: "DejaVu Sans", sans-serif; font-size: 15px; letter-spacing: 0; }
.apps { display: flex; align-items: center; width: 979px; }
.tsearch { margin-left: 17px; width: 275px; height: 40px; border-radius: 20px; background: rgba(255,255,255,.14); border: 1px solid rgba(255,255,255,.12); display: flex; align-items: center; padding-left: 14px; color: #c8cbdc; font-size: 16px; margin-right: 5px; }
.tsearch span { margin-left: 12px; width: 164px; }
.app { width: 50px; height: 50px; margin-right: 5px; border-radius: 6px; display: flex; align-items: center; justify-content: center; position: relative; }
.on { background: rgba(255,255,255,.08); border: 1px solid rgba(255,255,255,.07); }
.on::after, .run::after { content: ""; position: absolute; left: 21px; bottom: 1px; width: 8px; height: 4px; border-radius: 2px; background: #8e94ad; }
.on::after { left: 14px; bottom: 0; width: 20px; background: #b9b5ec; }
.pre { font: bold 8.5px "Open Sans", sans-serif; text-anchor: middle; fill: #111; }
.tray { display: flex; align-items: center; font-size: 14.5px; letter-spacing: -.3px; }
.cloud { margin-left: 23px; }
.eng { margin-left: 22px; width: 30px; }
.wifi { margin-left: 22px; }
.spk { margin-left: 10px; }
.bat { margin-left: 9px; }
.clock { width: 89px; display: flex; flex-direction: column; text-align: right; line-height: 20px; letter-spacing: 0; margin-top: -2px; }
.tbell { margin-left: 11px; }
```
